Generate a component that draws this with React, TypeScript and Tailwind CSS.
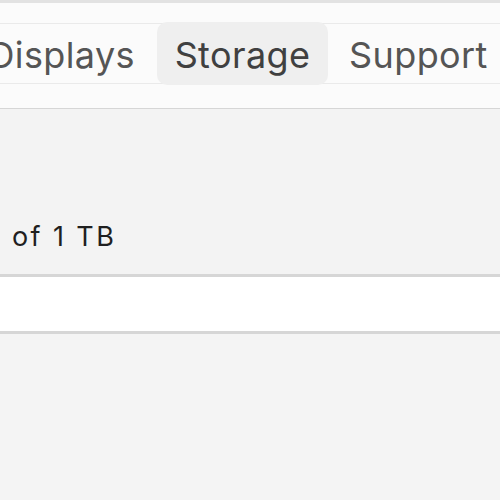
export default function App() {
  return (
    <div
      className="w-[500px] h-[500px] overflow-hidden bg-[#f3f3f3] flex flex-col"
      style={{ fontFamily: "Inter, 'Noto Sans', sans-serif" }}
    >
      <div className="h-[3px] bg-[#e2e2e2]" />
      <div className="bg-[#fbfbfb] border-b border-[#d6d6d6]">
        <div className="h-[20px]" />
        <div className="border-y border-[#eaeaea] h-[61px] flex items-center text-[36px] tracking-[0.4px]">
          <div className="w-[135px] shrink-0 flex justify-end text-[#555555] pt-[3px] whitespace-nowrap">
            Displays
          </div>
          <div className="h-[63px] -my-px ml-[22px] w-[171px] shrink-0 rounded-[10px] bg-[#efefef] text-[#404040] flex items-center justify-center pt-[3px]">
            Storage
          </div>
          <div className="ml-[21px] text-[#555555] pt-[3px]">Support</div>
        </div>
        <div className="h-[24px]" />
      </div>
      <div className="h-[165px] flex items-end pl-[12px] pb-[24px]">
        <span className="text-[27px] tracking-[2.4px] text-[#1f1f1f] leading-none">of 1 TB</span>
      </div>
      <div className="h-[60px] bg-white border-y-[3px] border-[#d6d6d6]" />
      <div className="flex-1 bg-[#f4f4f4]" />
    </div>
  );
}
